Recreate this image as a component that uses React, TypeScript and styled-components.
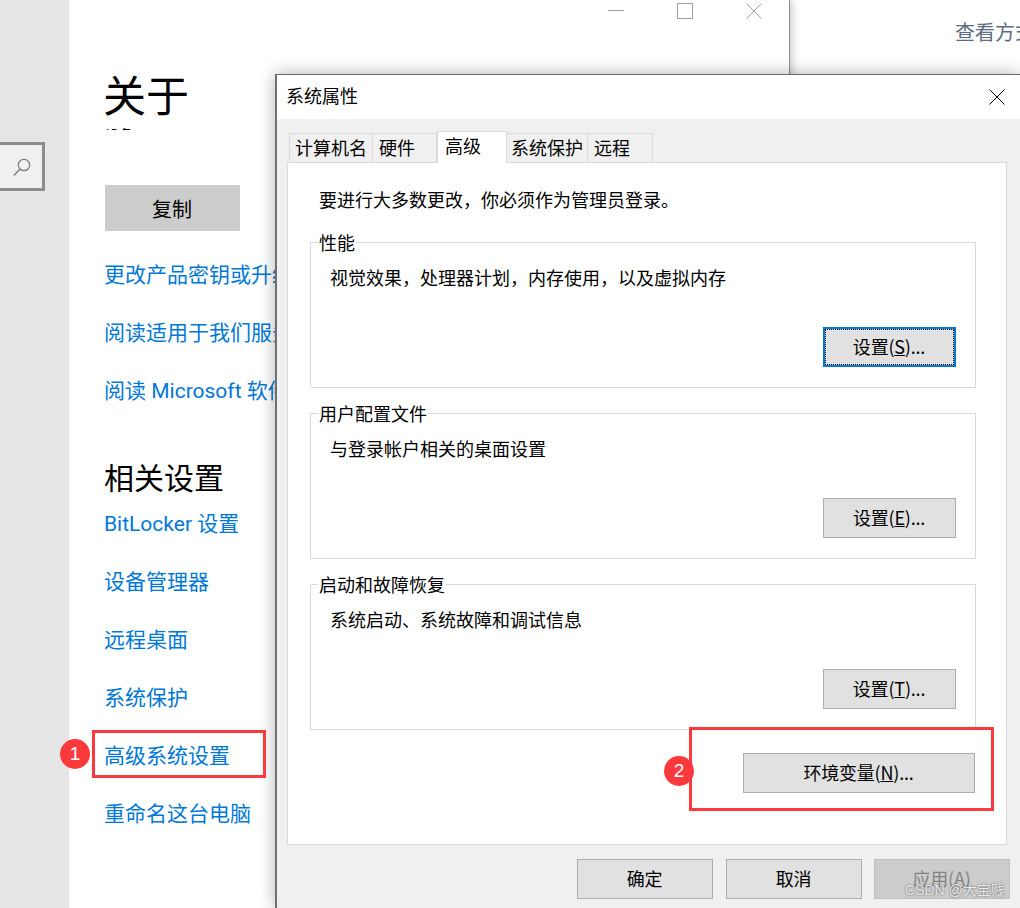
import React from "react";
import styled, { createGlobalStyle } from "styled-components";

const Global = createGlobalStyle`
  html, body { margin: 0; padding: 0; height: 100%; overflow: hidden; background: #fff; }
  #root { height: 100%; }
  * { box-sizing: border-box; }
  body { font-family: "Noto Sans CJK SC", "Liberation Sans", sans-serif; }
`;

const Desktop = styled.div`
  position: relative;
  width: 1020px;
  height: 908px;
  display: flex;
  overflow: hidden;
  background: #fff;
`;

const SettingsWindow = styled.section`
  position: relative;
  width: 790px;
  flex: none;
  display: flex;
  background: #fff;
  border-right: 1px solid #8f8f8f;
  box-shadow: 2px 0 8px rgba(0, 0, 0, 0.22);
`;

const Sidebar = styled.aside`
  width: 69px;
  flex: none;
  background: #e6e6e6;
  padding-top: 142px;
`;

const SearchBox = styled.div`
  width: 45px;
  height: 49px;
  background: #f0f0f0;
  border: 3px solid #8c8c8c;
  border-left: none;
  display: flex;
  align-items: center;
  justify-content: flex-end;
  padding-right: 10px;
`;

const Content = styled.main`
  flex: 1;
  min-width: 0;
  padding: 65px 0 0 36px;
`;

const PageTitle = styled.h1`
  margin: 0 0 0 -2px;
  font-size: 43px;
  line-height: 56px;
  font-weight: 400;
  color: #000;
`;

const ClippedLine = styled.div`
  margin-top: 7px;
  height: 2px;
  overflow: hidden;
  font-size: 14px;
  line-height: 14px;
  color: #000;
  & > span { display: block; margin-top: -1px; }
`;

const CopyButton = styled.button`
  display: block;
  width: 135px;
  height: 46px;
  margin-top: 55px;
  border: none;
  background: #cccccc;
  color: #000;
  font: inherit;
  font-size: 20px;
  padding: 0 1px 0 0;
`;

const LinkList = styled.nav<{ $top: number }>`
  margin-top: ${(p) => p.$top}px;
  display: flex;
  flex-direction: column;
`;

const SettingLink = styled.a`
  display: block;
  height: 58px;
  margin-left: -1px;
  line-height: 58px;
  font-family: Roboto, "Noto Sans CJK SC", sans-serif;
  font-size: 21px;
  color: #0078d7;
  white-space: nowrap;
`;

const Heading = styled.h2`
  margin: 36px 0 0 -1px;
  font-size: 30px;
  line-height: 40px;
  font-weight: 400;
  color: #000;
`;

const WindowControls = styled.div`
  position: absolute;
  top: 0;
  right: 1px;
  display: flex;
`;

const ControlSlot = styled.span`
  width: 69px;
  height: 21px;
  display: flex;
  align-items: center;
  justify-content: center;
`;

const OtherWindow = styled.section`
  flex: 1;
  background: #fff;
  padding: 18px 0 0 165px;
  white-space: nowrap;
  overflow: hidden;
`;

const ViewLabel = styled.span`
  font-size: 20px;
  line-height: 27px;
  color: #5b6b80;
`;

const Dialog = styled.section`
  position: absolute;
  left: 275px;
  top: 74px;
  right: 0;
  bottom: 0;
  display: flex;
  flex-direction: column;
  background: #f0f0f0;
  border-top: 1px solid #6a6a6a;
  border-left: 2px solid #6f6f6f;
  box-shadow: 0 0 16px rgba(0, 0, 0, 0.3);
`;

const TitleBar = styled.header`
  height: 44px;
  flex: none;
  background: #fff;
  display: flex;
  align-items: center;
  justify-content: space-between;
  padding: 0 15px 0 9px;
  font-size: 18px;
  color: #000;
  & > span { padding-bottom: 5px; }
`;

const DialogBody = styled.div`
  flex: 1;
  padding: 14px 10px 0 10px;
  display: flex;
  flex-direction: column;
  font-size: 18px;
  color: #000;
`;

const TabRow = styled.div`
  height: 29px;
  display: flex;
  margin-left: 2px;
  position: relative;
  z-index: 1;
`;

const Tab = styled.div<{ $w: number; $pad: number; $active?: boolean }>`
  width: ${(p) => p.$w}px;
  height: ${(p) => (p.$active ? 32 : 30)}px;
  margin-top: ${(p) => (p.$active ? -2 : 0)}px;
  padding-left: ${(p) => p.$pad}px;
  background: ${(p) => (p.$active ? "#fff" : "#f0f0f0")};
  border: 1px solid #d9d9d9;
  border-bottom: ${(p) => (p.$active ? "none" : "1px solid #d9d9d9")};
  border-left: ${(p) => (p.$active ? "1px solid #d9d9d9" : "none")};
  line-height: ${(p) => (p.$active ? 26 : 27)}px;
  white-space: nowrap;
  &:first-child { border-left: 1px solid #d9d9d9; }
`;

const Panel = styled.div`
  width: 720px;
  height: 683px;
  flex: none;
  background: #fff;
  border: 1px solid #d9d9d9;
  padding: 24px 30px 0 22px;
`;

const IntroLine = styled.p`
  margin: 0 0 31px 9px;
  line-height: 24px;
`;

const Group = styled.div`
  position: relative;
  height: 146px;
  border: 1px solid #d9d9d9;
  padding: 22px 19px 0 19px;
  display: flex;
  flex-direction: column;
  justify-content: space-between;
  & + & { margin-top: 25px; }
`;

const GroupLegend = styled.span`
  position: absolute;
  top: -13px;
  left: 7px;
  background: #fff;
  padding: 0 1px;
  line-height: 24px;
`;

const GroupText = styled.p`
  margin: 0;
  line-height: 24px;
`;

const GroupActions = styled.div`
  display: flex;
  justify-content: flex-end;
  margin-bottom: 20px;
`;

const DlgButton = styled.button<{ $w: number; $focus?: boolean; $disabled?: boolean }>`
  position: relative;
  width: ${(p) => p.$w}px;
  height: 40px;
  padding: 0 1px 2px 0;
  font: inherit;
  font-size: 18px;
  letter-spacing: -0.2px;
  background: ${(p) => (p.$disabled ? "#cccccc" : "#e1e1e1")};
  color: ${(p) => (p.$disabled ? "#838383" : "#000")};
  border: ${(p) =>
    p.$focus ? "2px solid #0078d7" : p.$disabled ? "1px solid #bfbfbf" : "1px solid #adadad"};
  outline: ${(p) => (p.$focus ? "1px dotted #000" : "none")};
  outline-offset: ${(p) => (p.$focus ? "-3px" : "0")};
  white-space: nowrap;
`;

const EnvRow = styled.div`
  display: flex;
  justify-content: flex-end;
  margin-top: 23px;
  padding-right: 1px;
`;

const FooterRow = styled.div`
  display: flex;
  justify-content: flex-end;
  gap: 12px;
  margin-top: 14px;
  & > :first-child { margin-right: 1px; }
`;

const RedBox = styled.div<{ $x: number; $y: number; $w: number; $h: number }>`
  position: absolute;
  left: ${(p) => p.$x}px;
  top: ${(p) => p.$y}px;
  width: ${(p) => p.$w}px;
  height: ${(p) => p.$h}px;
  border: 3px solid #fc3a3d;
  pointer-events: none;
`;

const Badge = styled.div<{ $x: number; $y: number }>`
  position: absolute;
  left: ${(p) => p.$x}px;
  top: ${(p) => p.$y}px;
  width: 30px;
  height: 30px;
  border-radius: 50%;
  background: #fc3a3d;
  color: #fff;
  font-family: "Liberation Sans", sans-serif;
  font-size: 19px;
  line-height: 30px;
  text-align: center;
`;

const Watermark = styled.div`
  position: absolute;
  left: 905px;
  top: 880px;
  font-family: "Liberation Sans", "Noto Sans CJK SC", sans-serif;
  font-size: 14px;
  line-height: 20px;
  color: rgba(255, 255, 255, 0.85);
  text-shadow: 0 0 2px rgba(70, 70, 70, 1);
  white-space: nowrap;
`;

const CloseIcon = ({ color, size = 16 }: { color: string; size?: number }) => (
  <svg width={size} height={size} viewBox="0 0 16 16" aria-hidden="true">
    <path d="M.5.5l15 15M15.5.5l-15 15" stroke={color} strokeWidth="1" fill="none" />
  </svg>
);

export default function App() {
  return (
    <Desktop>
      <Global />
      <SettingsWindow>
        <Sidebar>
          <SearchBox>
            <svg width="20" height="20" viewBox="0 0 20 20" aria-hidden="true">
              <circle cx="12" cy="8" r="5.7" stroke="#7d7d7d" strokeWidth="1.2" fill="none" />
              <path d="M8 12.2L1.8 18.4" stroke="#7d7d7d" strokeWidth="1.4" fill="none" />
            </svg>
          </SearchBox>
        </Sidebar>
        <Content>
          <PageTitle>关于</PageTitle>
          <ClippedLine><span>设备</span></ClippedLine>
          <CopyButton>复制</CopyButton>
          <LinkList $top={15}>
            <SettingLink>更改产品密钥或升级你的 Windows 版本</SettingLink>
            <SettingLink>阅读适用于我们服务的 Microsoft 服务协议</SettingLink>
            <SettingLink>阅读 Microsoft 软件许可条款</SettingLink>
          </LinkList>
          <Heading>相关设置</Heading>
          <LinkList $top={-1}>
            <SettingLink>BitLocker 设置</SettingLink>
            <SettingLink>设备管理器</SettingLink>
            <SettingLink>远程桌面</SettingLink>
            <SettingLink>系统保护</SettingLink>
            <SettingLink>高级系统设置</SettingLink>
            <SettingLink>重命名这台电脑</SettingLink>
          </LinkList>
        </Content>
        <WindowControls>
          <ControlSlot>
            <svg width="16" height="16" viewBox="0 0 16 16" aria-hidden="true">
              <path d="M0 7.5h16" stroke="#a0a0a0" fill="none" />
            </svg>
          </ControlSlot>
          <ControlSlot>
            <svg width="16" height="16" viewBox="0 0 16 16" aria-hidden="true">
              <rect x=".5" y=".5" width="15" height="15" stroke="#a0a0a0" fill="none" />
            </svg>
          </ControlSlot>
          <ControlSlot>
            <CloseIcon color="#a0a0a0" />
          </ControlSlot>
        </WindowControls>
      </SettingsWindow>
      <OtherWindow>
        <ViewLabel>查看方式</ViewLabel>
      </OtherWindow>

      <Dialog>
        <TitleBar>
          <span>系统属性</span>
          <CloseIcon color="#000" />
        </TitleBar>
        <DialogBody>
          <TabRow>
            <Tab $w={84} $pad={5}>计算机名</Tab>
            <Tab $w={64} $pad={6}>硬件</Tab>
            <Tab $w={70} $pad={7} $active>高级</Tab>
            <Tab $w={81} $pad={4}>系统保护</Tab>
            <Tab $w={65} $pad={6}>远程</Tab>
          </TabRow>
          <Panel>
            <IntroLine>要进行大多数更改，你必须作为管理员登录。</IntroLine>
            <Group>
              <GroupLegend>性能</GroupLegend>
              <GroupText>视觉效果，处理器计划，内存使用，以及虚拟内存</GroupText>
              <GroupActions>
                <DlgButton $w={133} $focus>设置(<u>S</u>)...</DlgButton>
              </GroupActions>
            </Group>
            <Group>
              <GroupLegend>用户配置文件</GroupLegend>
              <GroupText>与登录帐户相关的桌面设置</GroupText>
              <GroupActions>
                <DlgButton $w={133}>设置(<u>E</u>)...</DlgButton>
              </GroupActions>
            </Group>
            <Group>
              <GroupLegend>启动和故障恢复</GroupLegend>
              <GroupText>系统启动、系统故障和调试信息</GroupText>
              <GroupActions>
                <DlgButton $w={133}>设置(<u>T</u>)...</DlgButton>
              </GroupActions>
            </Group>
            <EnvRow>
              <DlgButton $w={232}>环境变量(<u>N</u>)...</DlgButton>
            </EnvRow>
          </Panel>
          <FooterRow>
            <DlgButton $w={136}>确定</DlgButton>
            <DlgButton $w={136}>取消</DlgButton>
            <DlgButton $w={136} $disabled>应用(<u>A</u>)</DlgButton>
          </FooterRow>
        </DialogBody>
      </Dialog>

      <RedBox $x={92} $y={730} $w={174} $h={48} />
      <Badge $x={60} $y={739}>1</Badge>
      <RedBox $x={689} $y={727} $w={305} $h={84} />
      <Badge $x={664} $y={756}>2</Badge>
      <Watermark>CSDN @大宝贱</Watermark>
    </Desktop>
  );
}
